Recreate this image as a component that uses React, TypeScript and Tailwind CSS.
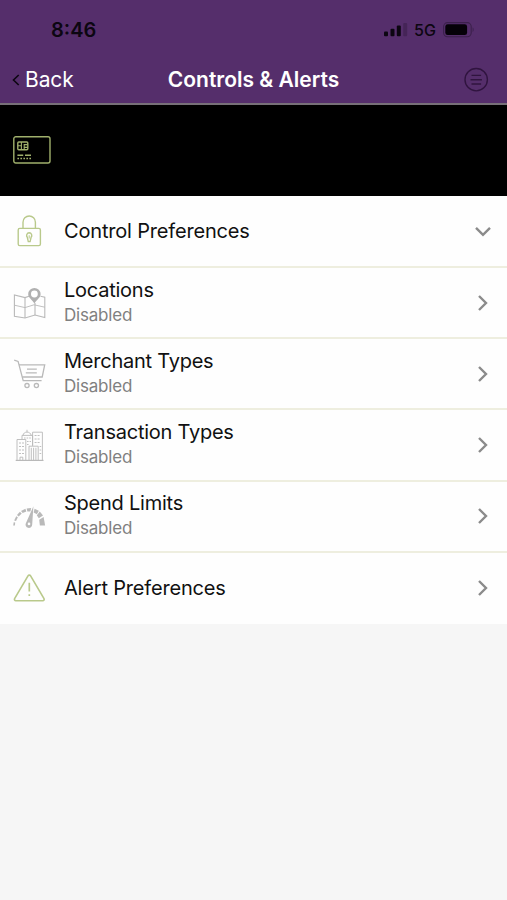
import type { ReactNode } from "react";
import { clsx } from "clsx";

interface PreferenceRowProps {
  icon: ReactNode;
  title: string;
  titleClass?: string;
  status?: string;
  expanded?: boolean;
  className?: string;
}

const GREEN = "#b9c98b";
const GRAY = "#b9b9b9";

function LockIcon() {
  return (
    <svg width="36" height="36" viewBox="0 0 36 36" fill="none" stroke={GREEN} strokeWidth="1.4">
      <rect x="6.2" y="15.4" width="22.2" height="17.2" rx="1.6" />
      <path d="M11 15.4V9.2a6.2 6.2 0 0 1 12.4 0v6.2" />
      <path d="M17.2 19.8a2.7 2.7 0 0 0-1.9 4.5l1 4.3h1.8l1-4.3a2.7 2.7 0 0 0-1.9-4.5z" />
      <path d="M17.2 22.3v3.2" strokeWidth="1" />
    </svg>
  );
}

function MapIcon() {
  return (
    <svg width="36" height="36" viewBox="0 0 36 36" fill="none" stroke={GRAY} strokeWidth="1.1">
      <path d="M17 11.2l-4 1.4L2.4 10v21.4L13 33l10-3 9.8 2.6V12.2l-4.3-1" />
      <path d="M13 12.6V33M23 18v12" />
      <path d="M2.4 20.2L13 22.6l9-2.8 10.8 2.4" strokeWidth="0.9" />
      <path
        d="M22.4 3a6.2 6.2 0 0 0-6.2 6.2c0 3.6 4.2 5.6 6.2 9.4 2-3.8 6.2-5.8 6.2-9.4A6.2 6.2 0 0 0 22.4 3z"
        fill="#b0b0b0"
        stroke="none"
      />
      <circle cx="22.4" cy="9" r="3.4" fill="#fff" stroke="none" />
    </svg>
  );
}

function CartIcon() {
  return (
    <svg width="36" height="36" viewBox="0 0 36 36" fill="none" stroke={GRAY} strokeWidth="1.3">
      <path d="M2.2 4.2l3.9 1.2L11.2 24.6h18.4" />
      <path d="M7 8.9h25.7L30.2 21H10.2" />
      <path d="M15 13.2h9.8M13.8 16.8h11" strokeWidth="1.2" />
      <circle cx="15" cy="29.6" r="2.1" />
      <circle cx="24.4" cy="29.6" r="2.1" />
    </svg>
  );
}

function BuildingsIcon() {
  return (
    <svg width="36" height="36" viewBox="0 0 36 36" fill="none" stroke={GRAY} strokeWidth="0.9">
      <path d="M3.7 33.4h27.8" strokeWidth="1.2" />
      <path d="M5 33V12.5h8.8V33" />
      <path d="M10 12.5V8.4h10.6v10.4M11 8.4c.3-2.2 2-3.3 4-3.3s3.8 1.1 4.2 3.3M15 5.1V2.8" />
      <path d="M20.6 18.8V5.2h9.8V33" />
      <path d="M17 33V19.2h9.2V33M19.3 20.8V33M21.6 20.8V33M23.9 20.8V33" />
      <path d="M7 16h5M7 19.5h5M7 23h5M7 26.5h5" strokeDasharray="2 1" />
      <path d="M22.6 8.5h6M22.6 12h6M22.6 15.5h6M27.6 19.5h1.6M27.6 23h1.6M27.6 26.5h1.6" strokeDasharray="2 1" />
      <path d="M12 11h7M15 14.5h4M15 17.5h2.5" strokeDasharray="1.6 1" />
      <path d="M8 33v-2.8h2.8V33" />
    </svg>
  );
}

function GaugeIcon() {
  return (
    <svg width="36" height="36" viewBox="0 0 36 36" fill={GRAY}>
      <path d="M1.2 27.5l.5-3.3 1.5.4-.3 2.9z" />
      <path d="M2.2 22.4l2-4.2 1.7 1-1.9 3.8z" />
      <path d="M5 17l2.9-3.2 1.8 1.7-3 3z" />
      <path d="M9 13l4.4-2.2.9 2.7-3.6 1.6z" />
      <path d="M14.6 10.4l4.6-.4-.8 3.4-3 .1z" />
      <path d="M22.6 10.7l4.2 2-1.9 3.6-3.3-1.8z" />
      <path d="M27.8 13.5l3.2 4.1-4.2 2.6-2-2.9z" />
      <path d="M31.6 19l1.5 8.5h-5.2l-.7-5.8z" />
      <path d="M21.4 8.3l-1.2 18.2a3.3 3.3 0 1 1-6.2-1.5z" />
      <circle cx="17" cy="25.9" r="1.3" fill="#fff" />
    </svg>
  );
}

function AlertIcon() {
  return (
    <svg width="36" height="36" viewBox="0 0 36 36" fill="none" stroke={GREEN} strokeWidth="1.6" strokeLinejoin="round">
      <path d="M16 5.9a1.5 1.5 0 0 1 2.6 0l13.4 22.7a1.4 1.4 0 0 1-1.2 2.1H3.8a1.4 1.4 0 0 1-1.2-2.1z" />
      <path d="M17.3 12.8v8.8M17.3 24.2v1.9" strokeWidth="1.7" />
    </svg>
  );
}

function CardIcon() {
  return (
    <svg width="38" height="28" viewBox="0 0 38 28" fill="none" stroke="#a0b06c" strokeWidth="1.4">
      <rect x="0.8" y="0.8" width="36.2" height="26.2" rx="2" />
      <rect x="4.8" y="6" width="10" height="7.8" rx="1" />
      <path d="M4.8 9.8h3.6M8.4 6v7.8M11.2 13.8V8.6h3.6M11.2 11.4h3.6" strokeWidth="1.1" />
      <path d="M4.4 19.2h5.8M12 19.2h6" strokeWidth="1.5" />
      <path d="M4.4 22.6h14.2" strokeWidth="1.5" strokeDasharray="1.6 1.4" />
    </svg>
  );
}

function PreferenceRow({ icon, title, titleClass, status, expanded, className }: PreferenceRowProps) {
  return (
    <button
      className={clsx("flex w-full items-center pl-3 pr-[15px] text-left", className || "h-[71.2px] border-b-2 border-[#eeeedf]")}
    >
      <span className="w-[52px] shrink-0">{icon}</span>
      <span className={clsx("flex flex-1 flex-col whitespace-nowrap", status && "pb-[2px]")}>
        <span className={clsx("text-[20px] leading-6 text-[#111111]", titleClass || "tracking-[-0.24px]")}>{title}</span>
        {status && <span className="pt-[3px] text-[17px] leading-[21px] tracking-[-0.2px] text-[#808080]">{status}</span>}
      </span>
      <svg width="18" height="18" viewBox="0 0 18 18" fill="none" stroke="#8b8b8b" strokeWidth="2.4">
        <path d={expanded ? "M2 5.8l7 7 7-7" : "M5 2l7 7-7 7"} />
      </svg>
    </button>
  );
}

export default function App() {
  return (
    <div className="flex h-[900px] w-[507px] flex-col overflow-hidden bg-[#f6f6f6] font-['Inter','Liberation_Sans',sans-serif]">
      <header className="h-[105px] shrink-0 border-b-2 border-[#777078] bg-[#552e6b]">
        {/* Status bar */}
        <div className="flex h-[60px] items-center justify-between pl-[51px] pr-8 text-[#0c0611]">
          <span className="text-[20px] font-semibold leading-6">8:46</span>
          <div className="flex items-center">
            <svg width="24" height="14" viewBox="0 0 24 14" fill="#0c0611">
              <rect x="0" y="8.4" width="4" height="4.8" rx="1" />
              <rect x="6.5" y="5.8" width="4" height="7.4" rx="1" />
              <rect x="12.8" y="2.6" width="4" height="10.6" rx="1" />
              <rect x="19.2" y="0" width="4" height="13.2" rx="1" fillOpacity="0.22" />
            </svg>
            <span className="ml-1.5 w-[29px] text-[16px] font-medium leading-5">5G</span>
            <svg width="32" height="16" viewBox="0 0 32 16" fill="#050108">
              <rect x="0.6" y="0.6" width="27.6" height="14.2" rx="4" fill="none" stroke="#3b204b" strokeWidth="1.1" />
              <rect x="2.3" y="2.3" width="21.8" height="10.8" rx="2.4" />
              <path d="M29.6 5.5c1.4.5 1.4 3.9 0 4.4z" fill="#3b204b" />
            </svg>
          </div>
        </div>

        <nav className="flex h-[39px] items-center justify-between pl-3 pr-[18px] text-white">
          <button className="flex w-[90px] items-center text-[21px] leading-6 tracking-[-0.1px]">
            <svg className="mr-[5px]" width="8" height="12" viewBox="0 0 8 12" fill="none" stroke="#0c0611" strokeWidth="1.6">
              <path d="M6.7 1L1.5 6l5.2 5" />
            </svg>
            Back
          </button>
          <h1 className="ml-1.5 whitespace-nowrap text-[21px] font-semibold leading-6">Controls &amp; Alerts</h1>
          <div className="flex w-[90px] justify-end">
            <svg width="26" height="26" viewBox="0 0 26 26" fill="none" stroke="#30143f" strokeWidth="1.4">
              <circle cx="13.2" cy="12.7" r="11.2" />
              <path d="M8.5 8.4h9.6M7.5 12.7h11.4M8.5 17h9.6" />
            </svg>
          </div>
        </nav>
      </header>

      {/* Card strip */}
      <section className="flex h-[91px] shrink-0 items-center bg-black pb-0.5 pl-[13px]">
        <CardIcon />
      </section>

      <main className="shrink-0 bg-[#fefefe]">
        <PreferenceRow
          icon={<LockIcon />}
          title="Control Preferences"
          titleClass="tracking-[-0.18px]"
          className="h-[72px] border-b-2 border-[#eeeedf]"
          expanded
        />
        <PreferenceRow icon={<MapIcon />} title="Locations" status="Disabled" />
        <PreferenceRow icon={<CartIcon />} title="Merchant Types" status="Disabled" />
        <PreferenceRow icon={<BuildingsIcon />} title="Transaction Types" status="Disabled" />
        <PreferenceRow icon={<GaugeIcon />} title="Spend Limits" status="Disabled" />
        <PreferenceRow icon={<AlertIcon />} title="Alert Preferences" titleClass="tracking-[-0.18px]" className="h-[71px]" />
      </main>
    </div>
  );
}
